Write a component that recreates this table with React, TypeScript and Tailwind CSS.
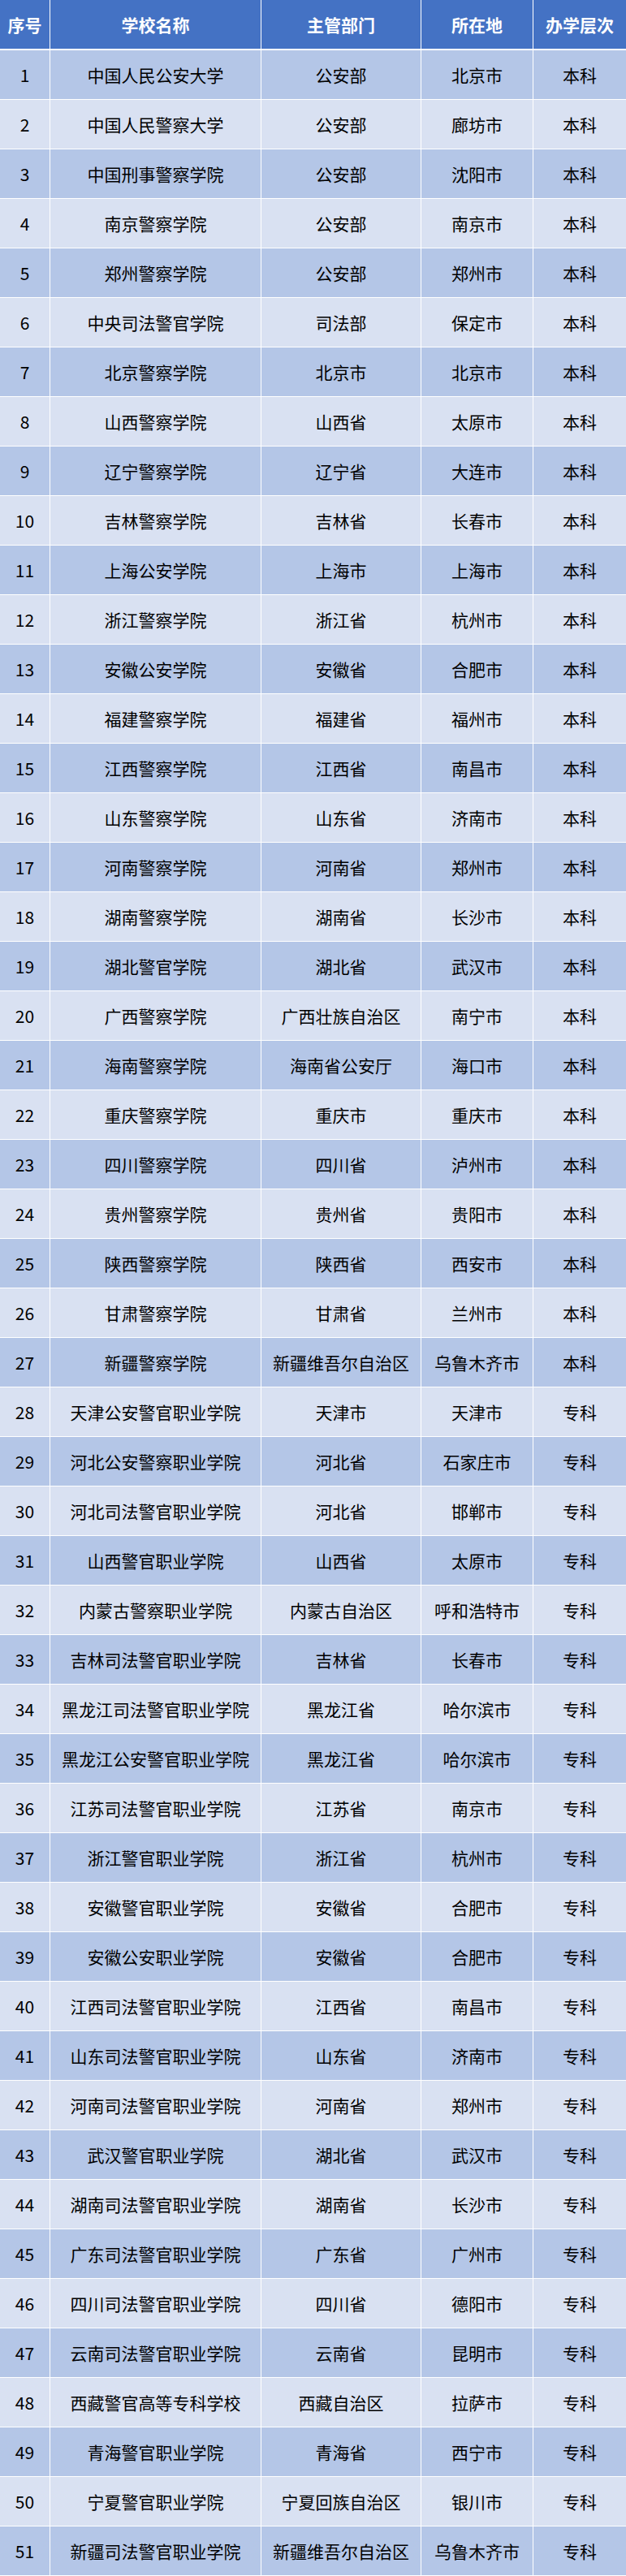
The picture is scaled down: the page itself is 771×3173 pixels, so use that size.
import React from "react";

const rows: [string, string, string, string][] = [
  ["中国人民公安大学", "公安部", "北京市", "本科"],
  ["中国人民警察大学", "公安部", "廊坊市", "本科"],
  ["中国刑事警察学院", "公安部", "沈阳市", "本科"],
  ["南京警察学院", "公安部", "南京市", "本科"],
  ["郑州警察学院", "公安部", "郑州市", "本科"],
  ["中央司法警官学院", "司法部", "保定市", "本科"],
  ["北京警察学院", "北京市", "北京市", "本科"],
  ["山西警察学院", "山西省", "太原市", "本科"],
  ["辽宁警察学院", "辽宁省", "大连市", "本科"],
  ["吉林警察学院", "吉林省", "长春市", "本科"],
  ["上海公安学院", "上海市", "上海市", "本科"],
  ["浙江警察学院", "浙江省", "杭州市", "本科"],
  ["安徽公安学院", "安徽省", "合肥市", "本科"],
  ["福建警察学院", "福建省", "福州市", "本科"],
  ["江西警察学院", "江西省", "南昌市", "本科"],
  ["山东警察学院", "山东省", "济南市", "本科"],
  ["河南警察学院", "河南省", "郑州市", "本科"],
  ["湖南警察学院", "湖南省", "长沙市", "本科"],
  ["湖北警官学院", "湖北省", "武汉市", "本科"],
  ["广西警察学院", "广西壮族自治区", "南宁市", "本科"],
  ["海南警察学院", "海南省公安厅", "海口市", "本科"],
  ["重庆警察学院", "重庆市", "重庆市", "本科"],
  ["四川警察学院", "四川省", "泸州市", "本科"],
  ["贵州警察学院", "贵州省", "贵阳市", "本科"],
  ["陕西警察学院", "陕西省", "西安市", "本科"],
  ["甘肃警察学院", "甘肃省", "兰州市", "本科"],
  ["新疆警察学院", "新疆维吾尔自治区", "乌鲁木齐市", "本科"],
  ["天津公安警官职业学院", "天津市", "天津市", "专科"],
  ["河北公安警察职业学院", "河北省", "石家庄市", "专科"],
  ["河北司法警官职业学院", "河北省", "邯郸市", "专科"],
  ["山西警官职业学院", "山西省", "太原市", "专科"],
  ["内蒙古警察职业学院", "内蒙古自治区", "呼和浩特市", "专科"],
  ["吉林司法警官职业学院", "吉林省", "长春市", "专科"],
  ["黑龙江司法警官职业学院", "黑龙江省", "哈尔滨市", "专科"],
  ["黑龙江公安警官职业学院", "黑龙江省", "哈尔滨市", "专科"],
  ["江苏司法警官职业学院", "江苏省", "南京市", "专科"],
  ["浙江警官职业学院", "浙江省", "杭州市", "专科"],
  ["安徽警官职业学院", "安徽省", "合肥市", "专科"],
  ["安徽公安职业学院", "安徽省", "合肥市", "专科"],
  ["江西司法警官职业学院", "江西省", "南昌市", "专科"],
  ["山东司法警官职业学院", "山东省", "济南市", "专科"],
  ["河南司法警官职业学院", "河南省", "郑州市", "专科"],
  ["武汉警官职业学院", "湖北省", "武汉市", "专科"],
  ["湖南司法警官职业学院", "湖南省", "长沙市", "专科"],
  ["广东司法警官职业学院", "广东省", "广州市", "专科"],
  ["四川司法警官职业学院", "四川省", "德阳市", "专科"],
  ["云南司法警官职业学院", "云南省", "昆明市", "专科"],
  ["西藏警官高等专科学校", "西藏自治区", "拉萨市", "专科"],
  ["青海警官职业学院", "青海省", "西宁市", "专科"],
  ["宁夏警官职业学院", "宁夏回族自治区", "银川市", "专科"],
  ["新疆司法警官职业学院", "新疆维吾尔自治区", "乌鲁木齐市", "专科"],
];

const gridCls = "grid grid-cols-[61px_259px_196px_137px_114px] gap-x-px";

export default function App() {
  const headers = ["序号", "学校名称", "主管部门", "所在地", "办学层次"];
  return (
    <div
      className="w-[771px] bg-white pb-px text-[21px] leading-none"
      style={{ fontFamily: '"Microsoft YaHei", "Noto Sans CJK SC", "Noto Sans", sans-serif' }}
    >
      <div className={`${gridCls} mb-[2px]`}>
        {headers.map((h) => (
          <div
            key={h}
            className="h-[60px] bg-[#4472C4] flex items-center justify-center text-white font-bold whitespace-nowrap"
          >
            {h}
          </div>
        ))}
      </div>
      <div className="flex flex-col gap-y-px">
        {rows.map((r, i) => (
          <div key={i} className={gridCls}>
            {[String(i + 1), ...r].map((c, j) => (
              <div
                key={j}
                className={`h-[60px] flex items-center justify-center text-black whitespace-nowrap ${
                  i % 2 === 0 ? "bg-[#B4C6E7]" : "bg-[#D9E1F2]"
                }`}
              >
                {c}
              </div>
            ))}
          </div>
        ))}
      </div>
    </div>
  );
}
